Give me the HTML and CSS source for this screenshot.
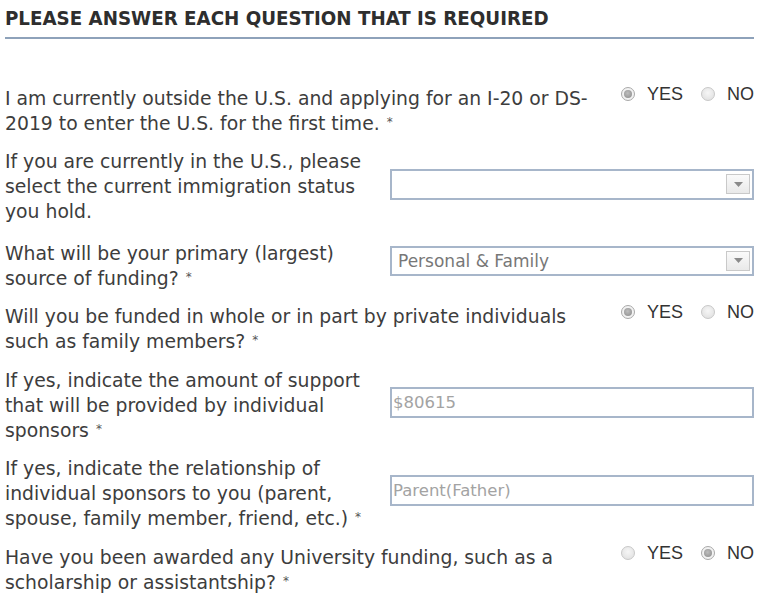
FILE: index.html
```html
<!DOCTYPE html>
<html>
<head>
<meta charset="utf-8">
<link rel="stylesheet" href="styles.css">
</head>
<body>
<div class="form">
  <h2 class="title">PLEASE ANSWER EACH QUESTION THAT IS REQUIRED</h2>
  <div class="questions">
    <div class="row radio-row">
      <div class="label wide">I am currently outside the U.S. and applying for an I-20 or DS-2019 to enter the U.S. for the first time.<span class="req">*</span></div>
      <div class="choices">
        <span class="radio on"></span><span class="opt">YES</span>
        <span class="radio"></span><span class="opt">NO</span>
      </div>
    </div>
    <div class="row field-row">
      <div class="label">If you are currently in the U.S., please select the current immigration status you hold.</div>
      <div class="field select"><span class="value"></span><span class="drop"><svg width="9" height="5" viewBox="0 0 9 5"><path d="M0 0h9L4.5 5z" fill="#8a8a8a"/></svg></span></div>
    </div>
    <div class="row field-row spaced">
      <div class="label">What will be your primary (largest) source of funding?<span class="req">*</span></div>
      <div class="field select high"><span class="value">Personal &amp; Family</span><span class="drop"><svg width="9" height="5" viewBox="0 0 9 5"><path d="M0 0h9L4.5 5z" fill="#8a8a8a"/></svg></span></div>
    </div>
    <div class="row radio-row">
      <div class="label wide">Will you be funded in whole or in part by private individuals such as family members?<span class="req">*</span></div>
      <div class="choices">
        <span class="radio on"></span><span class="opt">YES</span>
        <span class="radio"></span><span class="opt">NO</span>
      </div>
    </div>
    <div class="row field-row">
      <div class="label">If yes, indicate the amount of support that will be provided by individual sponsors<span class="req">*</span></div>
      <div class="field input"><span class="value light">$80615</span></div>
    </div>
    <div class="row field-row">
      <div class="label">If yes, indicate the relationship of individual sponsors to you (parent, spouse, family member, friend, etc.)<span class="req">*</span></div>
      <div class="field input"><span class="value light">Parent(Father)</span></div>
    </div>
    <div class="row radio-row spaced-sm">
      <div class="label wide">Have you been awarded any University funding, such as a scholarship or assistantship?<span class="req">*</span></div>
      <div class="choices">
        <span class="radio"></span><span class="opt">YES</span>
        <span class="radio on"></span><span class="opt">NO</span>
      </div>
    </div>
  </div>
</div>
</body>
</html>
```
FILE: styles.css
```css
html, body {
  margin: 0;
  padding: 0;
  background: #ffffff;
}
body {
  font-family: "DejaVu Sans", Verdana, sans-serif;
  color: #3d3d3d;
}
.form {
  width: 749px;
  padding: 7px 0 0 5px;
}
.title {
  margin: 0;
  font-family: "DejaVu Sans Condensed", "DejaVu Sans", sans-serif;
  font-weight: bold;
  font-size: 20.3px;
  line-height: 23px;
  color: #2e2e2e;
  padding-bottom: 7px;
  border-bottom: 2px solid #8ea2ba;
}
.questions {
  display: flex;
  flex-direction: column;
  gap: 13.4px;
  padding-top: 47px;
}
.row {
  display: flex;
  align-items: center;
}
.row.spaced {
  margin-top: 3px;
}
.row.spaced-sm {
  margin-top: 1px;
}
.label {
  width: 375px;
  font-size: 18.8px;
  line-height: 25px;
}
.label.wide {
  width: 600px;
}
.req {
  display: inline-block;
  margin-left: 7px;
  font-size: 12px;
  line-height: 12px;
  color: #555;
  vertical-align: 4px;
}
.radio-row {
  align-items: flex-start;
}
.choices {
  margin-left: auto;
  display: flex;
  align-items: center;
  height: 16px;
  font-family: "Liberation Sans", Arial, sans-serif;
  font-size: 18px;
  color: #333;
}
.radio {
  width: 14px;
  height: 14px;
  border-radius: 50%;
  box-sizing: border-box;
  border: 1px solid #c8c8c8;
  background: radial-gradient(circle at 50% 40%, #f6f6f6 0%, #dddddd 100%);
  margin-right: 12px;
  display: flex;
  align-items: center;
  justify-content: center;
}
.radio.on {
  border-color: #a9a9a9;
  background: #f2f2f2;
}
.radio.on::after {
  content: "";
  width: 8px;
  height: 8px;
  border-radius: 50%;
  background: radial-gradient(circle at 45% 40%, #bdbdbd 0%, #8a8a8a 100%);
}
.opt {
  margin-right: 18px;
}
.opt:last-child {
  margin-right: 0;
}
.field {
  margin-left: auto;
  width: 364px;
  height: 31px;
  box-sizing: border-box;
  border: 2px solid #a7b6ca;
  display: flex;
  align-items: center;
  margin-bottom: 5px;
}
.field.high {
  height: 30px;
  margin-bottom: 10px;
}
.value {
  flex: 1;
  padding-left: 6px;
  font-size: 17px;
  color: #777;
}
.value.light {
  padding-left: 1px;
  font-size: 16.5px;
  color: #a3a3a3;
}
.drop {
  width: 24px;
  height: 20px;
  margin-right: 2px;
  box-sizing: border-box;
  border: 1px solid #c9c9c9;
  background: linear-gradient(#fafafa, #e9e9e9);
  display: flex;
  align-items: center;
  justify-content: center;
}
```
